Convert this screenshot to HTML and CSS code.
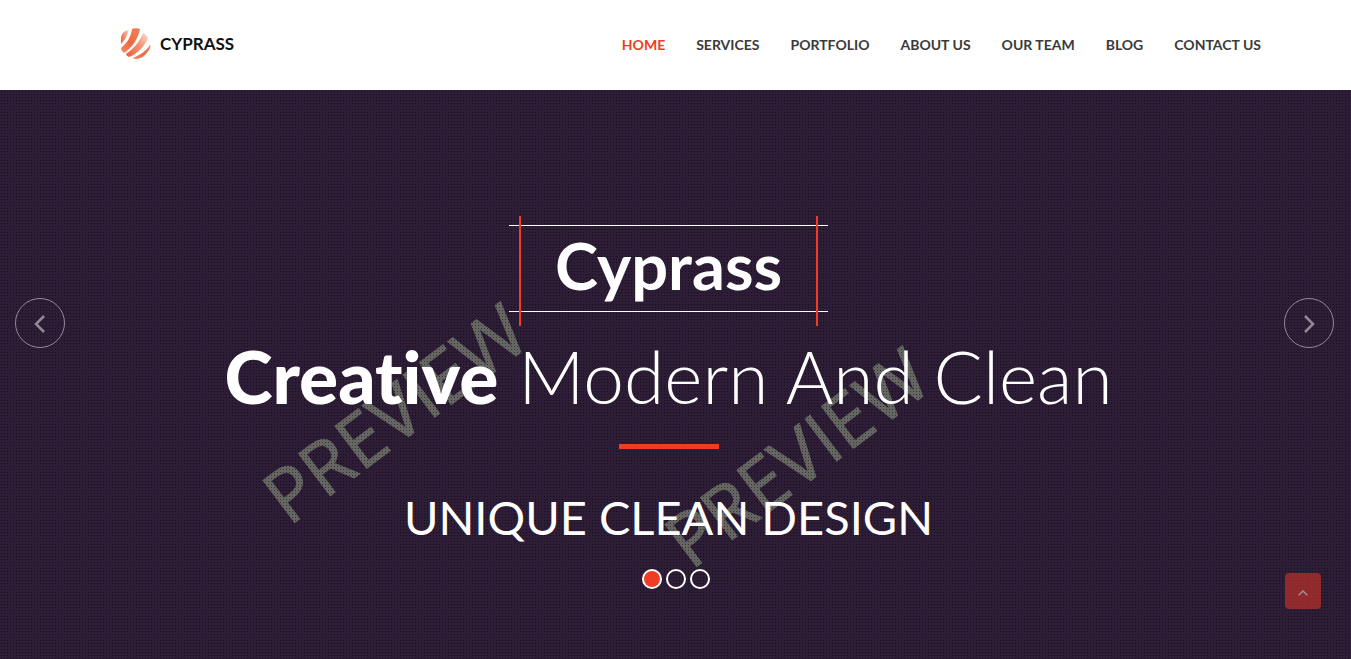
FILE: index.html
```html
<!DOCTYPE html>
<html lang="en">
<head>
<meta charset="utf-8">
<meta name="viewport" content="width=device-width, initial-scale=1">
<title>Cyprass</title>
<link rel="stylesheet" href="styles.css">
</head>
<body>
<header class="header">
  <a class="brand" href="#home">
    <svg class="brand-mark" viewBox="0 0 31 31" aria-hidden="true">
      <defs>
        <linearGradient id="flame" x1="0" y1="1" x2="0.6" y2="0">
          <stop offset="0" stop-color="#f58a68"/>
          <stop offset="0.5" stop-color="#ee6a40"/>
          <stop offset="1" stop-color="#f07a50"/>
        </linearGradient>
        <linearGradient id="fade" x1="0" y1="1" x2="1" y2="0">
          <stop offset="0" stop-color="#ee5a34"/>
          <stop offset="0.6" stop-color="#f4987a"/>
          <stop offset="1" stop-color="#fbe0d6"/>
        </linearGradient>
      </defs>
      <path fill="url(#fade)" d="M1 9C2 5 5 2 9 2C8 6 5 12 1 16Z"/>
      <path fill="url(#flame)" d="M12 1C14 0 17 0 20 1C18 11 12 20 4 25C2 23 1 22 1 20C7 15 11 9 12 1Z"/>
      <path fill="url(#fade)" d="M23 5C25 6 27 8 28 10C25 18 17 26 9 29C7 28 6 27 6 26C13 21 19 15 23 5Z"/>
      <path fill="url(#flame)" d="M30 17C31 18 30 20 29 22C26 27 21 31 16 31C14 31 13 30 13 30C20 27 26 23 30 17Z"/>
    </svg>
    <span>CYPRASS</span>
  </a>
  <nav class="nav" aria-label="Main">
    <a class="nav-link active" href="#home">HOME</a>
    <a class="nav-link" href="#services">SERVICES</a>
    <a class="nav-link" href="#portfolio">PORTFOLIO</a>
    <a class="nav-link" href="#about">ABOUT US</a>
    <a class="nav-link" href="#team">OUR TEAM</a>
    <a class="nav-link" href="#blog">BLOG</a>
    <a class="nav-link" href="#contact">CONTACT US</a>
  </nav>
</header>
<main class="hero" id="home">
  <svg class="backdrop" viewBox="0 0 1351 569" preserveAspectRatio="xMidYMid slice" aria-hidden="true">
    <text class="watermark" transform="translate(289 437) rotate(-37)">PREVIEW</text>
    <text class="watermark" transform="translate(691 481) rotate(-37)">PREVIEW</text>
  </svg>
  <div class="pattern"></div>
  <section class="slide">
    <h2 class="frame">Cyprass</h2>
    <h1 class="headline"><strong>Creative</strong> Modern And Clean</h1>
    <div class="rule"></div>
    <p class="tagline">UNIQUE CLEAN DESIGN</p>
  </section>
  <div class="dots">
    <button class="dot current" type="button" aria-label="Slide 1"></button>
    <button class="dot" type="button" aria-label="Slide 2"></button>
    <button class="dot" type="button" aria-label="Slide 3"></button>
  </div>
  <button class="arrow prev" type="button" aria-label="Previous slide">
    <svg viewBox="0 0 12 18" aria-hidden="true"><path d="M10 1L2 9L10 17"/></svg>
  </button>
  <button class="arrow next" type="button" aria-label="Next slide">
    <svg viewBox="0 0 12 18" aria-hidden="true"><path d="M2 1L10 9L2 17"/></svg>
  </button>
</main>
<a class="to-top" href="#home" aria-label="Back to top">
  <svg viewBox="0 0 10 6" aria-hidden="true"><path d="M0.700 5.300L5 1L9.300 5.300"/></svg>
</a>
</body>
</html>
```
FILE: styles.css
```css
* {
  box-sizing: border-box;
}

body {
  margin: 0;
  min-height: 100vh;
  display: flex;
  flex-direction: column;
  font-family: Lato, "Open Sans", sans-serif;
  font-variant-ligatures: none;
  background: #fff;
}

.header {
  display: flex;
  align-items: center;
  justify-content: space-between;
  height: 90px;
  padding: 0 90px 0 120px;
}

.brand {
  display: flex;
  align-items: center;
  gap: 9px;
  padding-bottom: 4px;
  color: #111;
  font-size: 17px;
  font-weight: 700;
  text-decoration: none;
}

.brand-mark {
  width: 31px;
  height: 31px;
}

.nav {
  display: flex;
  gap: 31px;
}

.nav-link {
  color: #3a3a3a;
  font-size: 14px;
  font-weight: 700;
  line-height: 20px;
  text-decoration: none;
}

.nav-link.active {
  color: #f03c23;
}

.hero {
  position: relative;
  flex: 1;
  display: flex;
  flex-direction: column;
  align-items: center;
  padding-bottom: 70px;
  background: #35213f;
  color: #fff;
}

.backdrop,
.pattern {
  position: absolute;
  inset: 0;
  width: 100%;
  height: 100%;
}

.watermark {
  font-family: "Open Sans", sans-serif;
  font-size: 74px;
  fill: #757571;
  stroke: #757571;
  stroke-width: 1px;
}

.pattern {
  background-image: radial-gradient(circle at 50% 50%, rgba(0, 0, 0, 0.55) 1px, rgba(0, 0, 0, 0.13) 1px);
  background-size: 3px 3px;
}

.slide {
  position: relative;
  flex: 1;
  align-self: stretch;
  display: flex;
  flex-direction: column;
  align-items: center;
  padding: 135px 14px 0 0;
}

.frame {
  position: relative;
  width: 319px;
  margin: 0 0 24px;
  padding-bottom: 6px;
  border: solid #fff;
  border-width: 1px 0;
  font-size: 65px;
  font-weight: 700;
  line-height: 79px;
  text-align: center;
}

.frame::before,
.frame::after {
  content: "";
  position: absolute;
  top: -10px;
  bottom: -15px;
  width: 2px;
  background: #f03c23;
}

.frame::before {
  left: 10px;
}

.frame::after {
  right: 10px;
}

.headline {
  margin: 0;
  font-size: 73px;
  font-weight: 300;
  line-height: 80px;
}

.headline strong {
  font-weight: 900;
}

.rule {
  width: 100px;
  height: 5px;
  margin: 28px 0 38px;
  background: #f03c23;
}

.tagline {
  margin: 0;
  font-size: 47px;
  line-height: 60px;
}

.dots {
  position: relative;
  display: flex;
  gap: 4px;
}

.dot {
  width: 20px;
  height: 20px;
  padding: 0;
  border: 2px solid #fff;
  border-radius: 50%;
  background: transparent;
}

.dot.current {
  background: #f03c23;
}

.arrow {
  position: absolute;
  top: 208px;
  display: grid;
  place-items: center;
  width: 50px;
  height: 50px;
  padding: 2px 0 0;
  border: 1px solid #918a96;
  border-radius: 50%;
  background: transparent;
}

.arrow svg {
  width: 12px;
  height: 18px;
  fill: none;
  stroke: #918a96;
  stroke-width: 2.5;
}

.prev {
  left: 15px;
}

.next {
  right: 17px;
}

.to-top {
  position: fixed;
  right: 30px;
  bottom: 50px;
  display: grid;
  place-items: center;
  width: 36px;
  height: 36px;
  padding-top: 3px;
  border-radius: 4px;
  background: rgba(200, 50, 42, 0.65);
}

.to-top svg {
  width: 10px;
  height: 6px;
  fill: none;
  stroke: #a58b98;
  stroke-width: 1.5;
}
```
